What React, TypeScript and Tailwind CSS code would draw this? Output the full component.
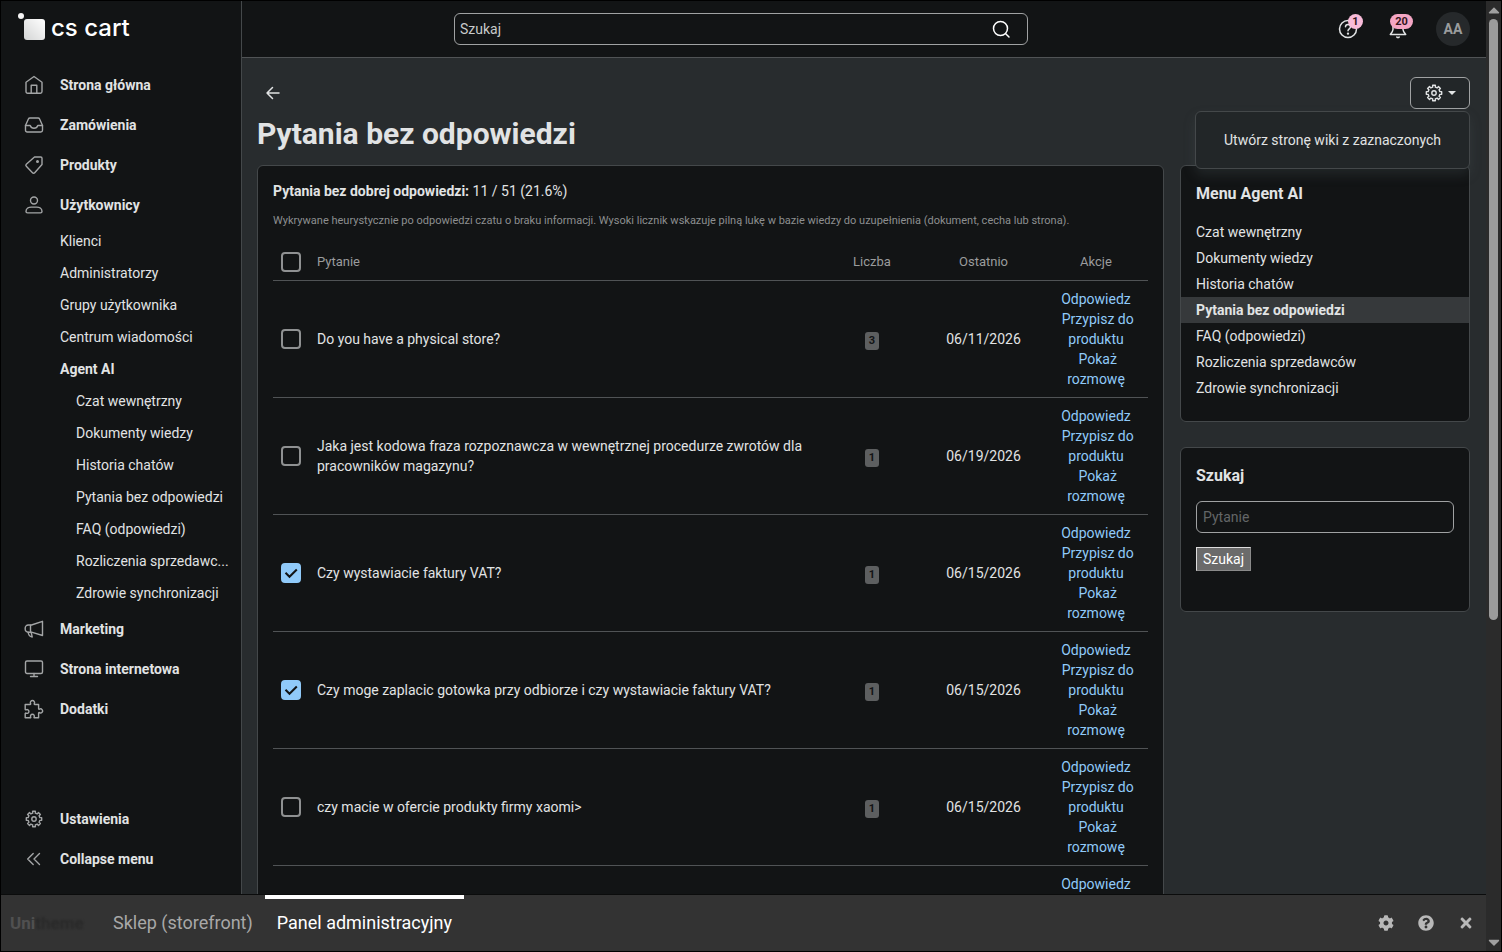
import React, { useState } from "react";
import { FaCaretDown, FaCaretUp, FaCog, FaQuestionCircle, FaTimes } from "react-icons/fa";

interface IconProps {
  children: React.ReactNode;
}

const Icon: React.FC<IconProps> = ({ children }) => (
  <svg
    viewBox="0 0 20 20"
    fill="none"
    stroke="currentColor"
    strokeWidth="1.4"
    strokeLinecap="round"
    strokeLinejoin="round"
    aria-hidden="true"
    className="size-5 shrink-0"
  >
    {children}
  </svg>
);

const HomeIcon = () => (
  <Icon>
    <path d="M2 7.2 10 1.5l8 5.7v9.4a1.6 1.6 0 0 1-1.6 1.6H3.6A1.6 1.6 0 0 1 2 16.600Z" />
    <path d="M7.200 18.200V10.200h5.600v8" />
  </Icon>
);

const InboxIcon = () => (
  <Icon>
    <path d="M1.500 10.500 4.400 4c.3-.7.8-1 1.500-1h8.200c.7 0 1.200.3 1.500 1l2.900 6.500v4.800c0 1-.7 1.700-1.700 1.700H3.200c-1 0-1.700-.7-1.700-1.700Z" />
    <path d="M1.500 10.500h4.700c.7 2 1.800 2.700 3.800 2.700s3.100-.7 3.800-2.700h4.700" />
  </Icon>
);

const TagIcon = () => (
  <Icon>
    <path d="M10.500 2h6.200c.8 0 1.300.5 1.300 1.300v6.200L10.700 17.700a1.500 1.500 0 0 1-2.200 0L2.300 11.300a1.500 1.500 0 0 1 0-2.100Z" />
    <circle cx="13.500" cy="6.500" r="0.800" fill="currentColor" />
  </Icon>
);

const UserIcon = () => (
  <Icon>
    <circle cx="10" cy="5.500" r="3.500" />
    <path d="M2 16.500c0-3 2.800-4.400 5.200-4.400h5.600c2.400 0 5.200 1.400 5.200 4.400 0 1-.6 1.400-1.500 1.400h-13c-.9 0-1.500-.4-1.500-1.400Z" />
  </Icon>
);

const MegaphoneIcon = () => (
  <Icon>
    <path d="M7.500 6 18.500 2.300v14.200L7.500 13.200H4.200A3 3 0 0 1 1.200 10.200V9a3 3 0 0 1 3-3Z" />
    <path d="M6.500 6.200v6.800M4.200 13.300c.2 2.600 1.500 4.400 4 4.700l-1-4.500" />
  </Icon>
);

const MonitorIcon = () => (
  <Icon>
    <rect x="1.500" y="2" width="17" height="12.500" rx="1.500" />
    <path d="M10 14.500v2.800M6.500 17.500h7" />
  </Icon>
);

const PuzzleIcon = () => (
  <Icon>
    <path d="M1.200 5.500h4.900c.5 0 .7-.5.500-.9a2.100 2.100 0 1 1 3.700 0c-.2.400 0 .9.500.9h3.800v4.200c0 .5.500.7.900.5a2 2 0 1 1 0 3.400c-.4-.2-.9 0-.9.500v4.700h-4c-.5 0-.7-.4-.5-.8a1.900 1.900 0 1 0-3.400 0c.2.400 0 .8-.5.800H1.200v-4.200c0-.5.500-.7.900-.5a1.900 1.900 0 1 0 0-3.300c-.4.200-.9 0-.9-.5Z" />
  </Icon>
);

// Eight teeth: two points on the inner radius and two on the outer one for each
const gearPoints = Array.from({ length: 8 }, (_, tooth) =>
  [
    [-13, 6],
    [-10, 7.800],
    [10, 7.800],
    [13, 6],
  ]
    .map(([offset, radius]) => {
      const angle = ((tooth * 45 + offset) * Math.PI) / 180;
      return `${(10 + radius * Math.sin(angle)).toFixed(2)},${(10 - radius * Math.cos(angle)).toFixed(2)}`;
    })
    .join(" ")
).join(" ");

const GearIcon = () => (
  <Icon>
    <circle cx="10" cy="10" r="2.200" />
    <polygon points={gearPoints} />
  </Icon>
);

const CollapseIcon = () => (
  <Icon>
    <path d="m9.200 4.500-5.500 5.500 5.500 5.500M15.500 4.500 10 10l5.500 5.500" />
  </Icon>
);

const userPages = ["Klienci", "Administratorzy", "Grupy użytkownika", "Centrum wiadomości"];

const agentPages = [
  "Czat wewnętrzny",
  "Dokumenty wiedzy",
  "Historia chatów",
  "Pytania bez odpowiedzi",
  "FAQ (odpowiedzi)",
  "Rozliczenia sprzedawców",
  "Zdrowie synchronizacji",
];

interface Question {
  text?: string;
  count?: number;
  date?: string;
  checked: boolean;
}

const initialQuestions: Question[] = [
  { text: "Do you have a physical store?", count: 3, date: "06/11/2026", checked: false },
  {
    text: "Jaka jest kodowa fraza rozpoznawcza w wewnętrznej procedurze zwrotów dla pracowników magazynu?",
    count: 1,
    date: "06/19/2026",
    checked: false,
  },
  { text: "Czy wystawiacie faktury VAT?", count: 1, date: "06/15/2026", checked: true },
  {
    text: "Czy moge zaplacic gotowka przy odbiorze i czy wystawiacie faktury VAT?",
    count: 1,
    date: "06/15/2026",
    checked: true,
  },
  { text: "czy macie w ofercie produkty firmy xaomi>", count: 1, date: "06/15/2026", checked: false },
  { checked: false },
];

interface NavItemProps {
  icon: React.ReactNode;
  label: string;
}

const NavItem: React.FC<NavItemProps> = ({ icon, label }) => (
  <a href="#" className="flex h-10 items-center gap-4 pl-[23px] font-bold">
    <span className="text-[#a3a5a6]">{icon}</span>
    {label}
  </a>
);

const Sidebar = () => (
  <aside className="flex w-[241px] shrink-0 flex-col border-r border-[#44484a] bg-[#121415]">
    <a href="#" aria-label="cs cart" className="ml-4 mt-2 flex h-10 items-start">
      <svg width="120" height="36" viewBox="0 0 120 36" aria-hidden="true">
        <defs>
          <linearGradient id="logo" x1="1" y1="0" x2="0" y2="1">
            <stop offset="0" stopColor="#fff" />
            <stop offset="1" stopColor="#d4d5d5" />
          </linearGradient>
        </defs>
        <circle cx="4" cy="7" r="3" fill="#f5f5f5" />
        <rect x="7" y="10" width="21" height="21" rx="3" fill="url(#logo)" />
        <text x="34" y="27" fill="#fff" fontSize="24" fontWeight="500" fontFamily="Inter, sans-serif">
          cs cart
        </text>
      </svg>
    </a>
    <nav className="mt-4 flex flex-1 flex-col">
      <NavItem icon={<HomeIcon />} label="Strona główna" />
      <NavItem icon={<InboxIcon />} label="Zamówienia" />
      <NavItem icon={<TagIcon />} label="Produkty" />
      <NavItem icon={<UserIcon />} label="Użytkownicy" />
      {userPages.map((page) => (
        <a key={page} href="#" className="flex h-8 items-center pl-[59px]">
          {page}
        </a>
      ))}
      <a href="#" className="flex h-8 items-center pl-[59px] font-bold">
        Agent AI
      </a>
      {agentPages.map((page) => (
        <a key={page} href="#" className="flex h-8 items-center whitespace-nowrap pl-[75px]">
          {page === "Rozliczenia sprzedawców" ? "Rozliczenia sprzedawc..." : page}
        </a>
      ))}
      <NavItem icon={<MegaphoneIcon />} label="Marketing" />
      <NavItem icon={<MonitorIcon />} label="Strona internetowa" />
      <NavItem icon={<PuzzleIcon />} label="Dodatki" />
    </nav>
    <div className="pb-[15px]">
      <NavItem icon={<GearIcon />} label="Ustawienia" />
      <button type="button" className="flex h-10 w-full items-center gap-4 pl-[23px] font-bold">
        <span className="text-[#a3a5a6]">
          <CollapseIcon />
        </span>
        Collapse menu
      </button>
    </div>
  </aside>
);

const Header = () => (
  <header className="flex h-[57px] shrink-0 items-center border-b border-[#505355] bg-[#121415] pl-[212px] pr-4">
    <form className="flex h-8 w-[574px] rounded-md border border-[#a0a2a3]">
      <input
        type="text"
        aria-label="Szukaj"
        placeholder="Szukaj"
        className="min-w-0 flex-1 px-[5px] outline-none placeholder:text-[#c8cacb]"
      />
      <button type="button" aria-label="Szukaj" className="flex w-[53px] items-center justify-center text-white">
        <Icon>
          <circle cx="9.500" cy="9.500" r="7" strokeWidth="1.500" />
          <path d="m14.700 14.700 3.300 3.300" strokeWidth="1.500" />
        </Icon>
      </button>
    </form>
    <div className="ml-auto flex items-center">
      <button type="button" aria-label="Pomoc" className="relative mr-[30px] text-[#e1e3e4]">
        <Icon>
          <circle cx="10" cy="10" r="8.500" strokeWidth="1.500" />
          <path d="M7.500 7.800c0-3.200 5-3.200 5 0 0 2-2.500 2-2.500 4" strokeWidth="1.500" />
          <circle cx="10" cy="14.600" r="0.500" fill="currentColor" />
        </Icon>
        <span className="absolute -top-[5px] left-[10px] flex h-[15px] w-[15px] items-center justify-center rounded-full bg-[#f8bbd9] text-[11px] font-bold text-[#331520]">
          1
        </span>
      </button>
      <button type="button" aria-label="Powiadomienia" className="relative mr-7 text-[#e1e3e4]">
        <Icon>
          <path d="M10 2a5 5 0 0 0-5 5v3.500c0 1.500-.8 2.500-2.700 5h15.400c-1.900-2.500-2.700-3.500-2.700-5V7a5 5 0 0 0-5-5Z" strokeWidth="1.500" />
          <path d="M8.800 18c.7.800 1.700.8 2.400 0" strokeWidth="1.500" />
        </Icon>
        <span className="absolute -top-[5px] left-[2px] flex h-[15px] w-[23px] items-center justify-center rounded-full bg-[#f4a6c4] text-[11px] font-bold text-[#331520]">
          20
        </span>
      </button>
      <button type="button" className="size-[34px] rounded-full bg-[#26292b] font-bold text-[#9a9c9d]">
        AA
      </button>
    </div>
  </header>
);

interface CheckboxProps {
  label: string;
  checked: boolean;
  onChange: (checked: boolean) => void;
}

const Checkbox: React.FC<CheckboxProps> = ({ label, checked, onChange }) => (
  <span className="grid size-5">
    <input
      type="checkbox"
      aria-label={label}
      checked={checked}
      onChange={(event) => onChange(event.target.checked)}
      className="col-start-1 row-start-1 size-5 appearance-none rounded-[4px] border-2 border-[#8f9192] checked:border-[#90caf9] checked:bg-[#90caf9]"
    />
    {checked && (
      <svg viewBox="0 0 20 20" className="pointer-events-none col-start-1 row-start-1 size-5" aria-hidden="true">
        <path d="m4.500 9.800 4 4 7.300-7.300" fill="none" stroke="#121415" strokeWidth="2" />
      </svg>
    )}
  </span>
);

const QuestionsTable = () => {
  const [questions, setQuestions] = useState(initialQuestions);

  const toggle = (index: number, checked: boolean) => {
    setQuestions(questions.map((item, i) => (i === index ? { ...item, checked } : item)));
  };

  const toggleAll = (checked: boolean) => {
    setQuestions(questions.map((item) => ({ ...item, checked })));
  };

  return (
    <table className="mt-[13px] w-full table-fixed">
      <thead>
        <tr className="border-b border-[#505355] text-[13px] text-[#9a9c9d]">
          <th className="w-9 p-2">
            <Checkbox label="Zaznacz wszystko" checked={questions.every((q) => q.checked)} onChange={toggleAll} />
          </th>
          <th className="px-2 text-left font-normal">Pytanie</th>
          <th className="w-[102px] font-normal">Liczba</th>
          <th className="w-[121px] font-normal">Ostatnio</th>
          <th className="w-[104px] font-normal">Akcje</th>
        </tr>
      </thead>
      <tbody>
        {questions.map((question, index) => (
          <tr key={index} className="border-b border-[#505355]">
            <td className="p-2">
              <Checkbox
                label={question.text ?? "Pytanie"}
                checked={question.checked}
                onChange={(checked) => toggle(index, checked)}
              />
            </td>
            <td className="p-2">{question.text}</td>
            <td className="p-2 text-center">
              {question.count && (
                <span className="mt-px inline-block h-[18px] w-[14px] rounded-[3px] bg-[#5d5f60] text-[11px] leading-[18px] font-bold text-[#121415]">
                  {question.count}
                </span>
              )}
            </td>
            <td className="p-2 text-center">{question.date}</td>
            <td className="p-2 text-center text-[#90caf9]">
              <a href="#">Odpowiedz</a> &nbsp;
              <a href="#">Przypisz do produktu</a> &nbsp;
              <a href="#">Pokaż rozmowę</a>
            </td>
          </tr>
        ))}
      </tbody>
    </table>
  );
};

const AgentMenu = () => (
  <section className="rounded-md border border-[#44484a] bg-[#121415] pt-4 pb-5">
    <h2 className="px-[15px] text-base font-bold">Menu Agent AI</h2>
    <ul className="mt-[13px]">
      {agentPages.map((page) => (
        <li key={page}>
          <a
            href="#"
            className={`block h-[26px] px-[15px] leading-[26px] ${
              page === "Pytania bez odpowiedzi" ? "bg-[#36393b] font-bold" : ""
            }`}
          >
            {page}
          </a>
        </li>
      ))}
    </ul>
  </section>
);

const SearchPanel = () => (
  <section className="rounded-md border border-[#44484a] bg-[#121415] px-[15px] pt-4 pb-10">
    <h2 className="text-base font-bold">Szukaj</h2>
    <input
      type="text"
      aria-label="Pytanie"
      placeholder="Pytanie"
      className="mt-[13px] block h-8 w-full rounded-md border border-[#a0a2a3] px-[6px] placeholder:text-[#636667]"
    />
    <button
      type="button"
      className="mt-[14px] block h-6 border border-[#8a8a8a] border-t-[#dcdcdc] border-l-[#dcdcdc] bg-[#6b6b6b] px-[6px] text-white"
    >
      Szukaj
    </button>
  </section>
);

const Content = () => (
  <main className="min-h-0 flex-1 overflow-hidden bg-[#282c2e] pl-[15px] pr-4 pt-[19px]">
    <div className="flex h-8 items-center justify-between">
      <a href="#" aria-label="Wstecz" className="ml-[6px]">
        <Icon>
          <path d="M16 10H4M9.500 4.500 4 10l5.500 5.500" strokeWidth="1.500" />
        </Icon>
      </a>
      <div className="relative">
        <button
          type="button"
          aria-label="Ustawienia strony"
          className="flex h-8 w-[60px] items-center justify-center gap-1 rounded-md border border-[#a0a2a3] bg-[#222628]"
        >
          <GearIcon />
          <svg viewBox="0 0 8 4" className="w-2" aria-hidden="true">
            <path d="M0 0h8L4 4Z" fill="currentColor" />
          </svg>
        </button>
        {/* rozwinięte menu akcji */}
        <div className="absolute top-[34px] right-0 rounded-md border border-[#44484a] bg-[#222628] py-[14px] shadow-[0_6px_12px_rgba(80,90,95,0.25)]">
          <button type="button" className="block h-7 whitespace-nowrap px-7">
            Utwórz stronę wiki z zaznaczonych
          </button>
        </div>
      </div>
    </div>
    <h1 className="mt-[5px] text-[30px] leading-10 font-bold">Pytania bez odpowiedzi</h1>
    <div className="mt-[11px] flex items-start gap-4">
      <section className="min-w-0 flex-1 rounded-md border border-[#44484a] bg-[#121415] p-[15px]">
        <p>
          <strong>Pytania bez dobrej odpowiedzi:</strong> 11 / 51 (21.6%)
        </p>
        <p className="mt-[10px] text-[11px] leading-5 text-[#8d8f90]">
          Wykrywane heurystycznie po odpowiedzi czatu o braku informacji. Wysoki licznik wskazuje pilną lukę w bazie
          wiedzy do uzupełnienia (dokument, cecha lub strona).
        </p>
        <QuestionsTable />
      </section>
      <div className="flex w-[290px] shrink-0 flex-col gap-[25px]">
        <AgentMenu />
        <SearchPanel />
      </div>
    </div>
  </main>
);

const BottomPanel = () => (
  <footer className="flex h-[57px] shrink-0 items-stretch border-t border-[#0b0c0c] bg-[#333] text-lg">
    <a href="#" className="flex w-[100px] items-center pl-[9px] text-[17px] font-bold">
      <span className="text-[#505050]">Uni</span>
      <span className="text-[#292929] blur-[1px]">theme</span>
    </a>
    <a href="#" className="flex items-center px-3 text-[#a8a8a8]">
      Sklep (storefront)
    </a>
    <a href="#" className="flex items-center border-t-4 border-white px-3 pb-1 text-white">
      Panel administracyjny
    </a>
    <div className="ml-auto flex items-center gap-6 pr-3 text-base text-[#b8b8b8]">
      <button type="button" aria-label="Ustawienia">
        <FaCog />
      </button>
      <button type="button" aria-label="Pomoc">
        <FaQuestionCircle />
      </button>
      <button type="button" aria-label="Zamknij">
        <FaTimes />
      </button>
    </div>
  </footer>
);

const PageScrollbar = () => (
  <div className="flex w-[15px] shrink-0 flex-col items-center bg-[#2b2b2b] text-[#a0a0a0]" aria-hidden="true">
    <FaCaretUp className="h-[18px] w-3" />
    <div className="h-[601px] w-[9px] rounded-full bg-[#9b9b9b]" />
    <FaCaretDown className="mt-auto h-[18px] w-3" />
  </div>
);

export default function App() {
  return (
    <div className="flex h-screen overflow-hidden border border-black bg-[#121415] font-['Roboto','Noto_Sans',sans-serif] text-sm text-[#e1e3e4]">
      <div className="flex min-w-0 flex-1 flex-col">
        <div className="flex min-h-0 flex-1">
          <Sidebar />
          <div className="flex min-w-0 flex-1 flex-col">
            <Header />
            <Content />
          </div>
        </div>
        <BottomPanel />
      </div>
      <PageScrollbar />
    </div>
  );
}
